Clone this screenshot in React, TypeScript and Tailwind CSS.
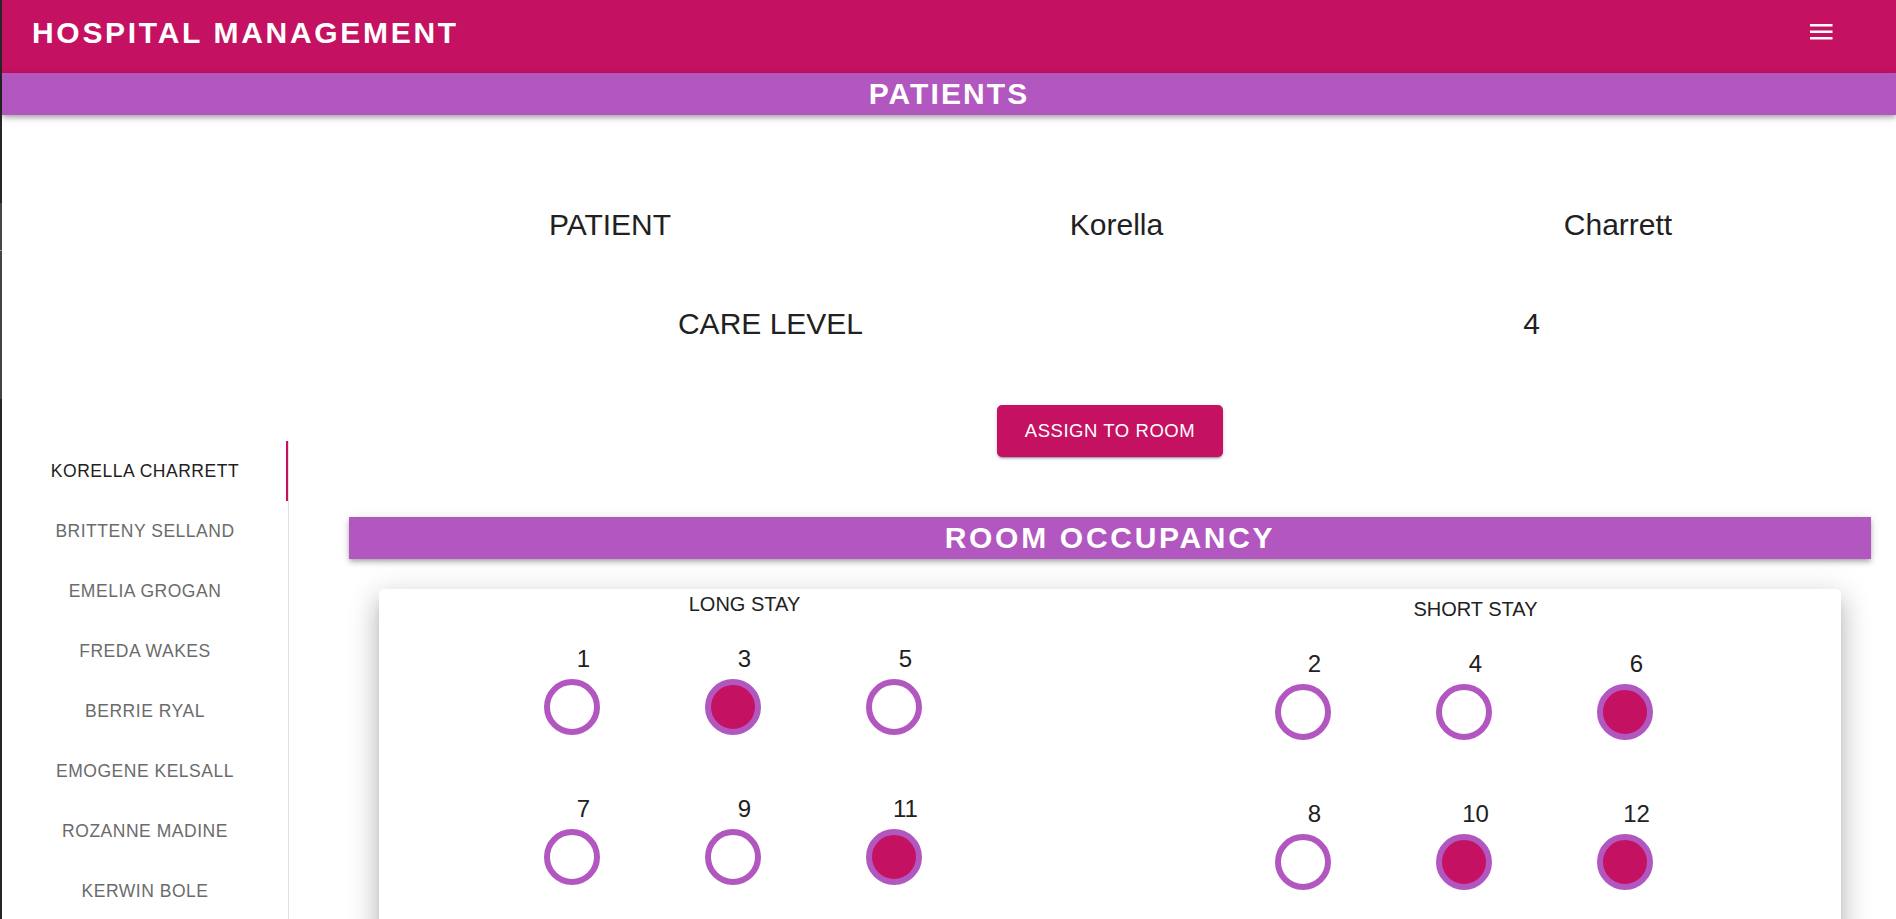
import { useState } from "react";

const patients = [
  "Korella Charrett",
  "Britteny Selland",
  "Emelia Grogan",
  "Freda Wakes",
  "Berrie Ryal",
  "Emogene Kelsall",
  "Rozanne Madine",
  "Kerwin Bole",
];

type Room = { no: number; taken: boolean };

const longStay: Room[][] = [
  [
    { no: 1, taken: false },
    { no: 3, taken: true },
    { no: 5, taken: false },
  ],
  [
    { no: 7, taken: false },
    { no: 9, taken: false },
    { no: 11, taken: true },
  ],
];

const shortStay: Room[][] = [
  [
    { no: 2, taken: false },
    { no: 4, taken: false },
    { no: 6, taken: true },
  ],
  [
    { no: 8, taken: false },
    { no: 10, taken: true },
    { no: 12, taken: true },
  ],
];

function MenuIcon() {
  return (
    <svg width="23" height="16" viewBox="0 0 23 16" fill="white">
      <rect x="0" y="0" width="22.5" height="2.5" />
      <rect x="0" y="6.5" width="22.5" height="2.5" />
      <rect x="0" y="13" width="22.5" height="2.5" />
    </svg>
  );
}

function RoomCell({ room }: { room: Room }) {
  return (
    <div className="flex w-[161px] flex-col items-center">
      <span className="text-[24px] leading-[28px] text-[#212121]">{room.no}</span>
      <div
        className={
          room.taken
            ? "mr-[24px] mt-[6px] h-[56px] w-[56px] rounded-full border-[6px] border-[#b157bf] bg-[#c51162]"
            : "mr-[24px] mt-[6px] h-[56px] w-[56px] rounded-full border-[6px] border-[#b157bf] bg-white"
        }
      />
    </div>
  );
}

function StayColumn({ title, rows, offset }: { title: string; rows: Room[][]; offset?: boolean }) {
  return (
    <div className={offset ? "flex flex-col items-center pt-[5px]" : "flex flex-col items-center"}>
      <div className="text-[20px] leading-[30px] text-[#212121]">{title}</div>
      <div className="mt-[26px] flex flex-col gap-[60px]">
        {rows.map((row, i) => (
          <div key={i} className="flex justify-center">
            {row.map((room) => (
              <RoomCell key={room.no} room={room} />
            ))}
          </div>
        ))}
      </div>
    </div>
  );
}

export default function App() {
  const [active, setActive] = useState(0);
  const [first, last] = patients[active].split(" ");

  return (
    <div className="flex h-screen overflow-hidden bg-white font-['Liberation_Sans',Arial,sans-serif]">
      {/* window edge */}
      <div className="flex w-[2px] shrink-0 flex-col">
        <div className="h-[203px] bg-[#262626]" />
        <div className="h-[47px] bg-[#474747]" />
        <div className="h-[1px] bg-[#9a9a9a]" />
        <div className="h-[148px] bg-[#444444]" />
        <div className="flex-1 bg-[#262626]" />
      </div>

      <div className="flex min-w-0 flex-1 flex-col">
        <header className="flex h-[73px] shrink-0 items-center justify-between bg-[#c51162] pb-[9px] pl-[30px] pr-[55px]">
          <h1 className="text-[30px] font-bold tracking-[0.09em] text-white">HOSPITAL MANAGEMENT</h1>
          <button className="flex h-[40px] w-[40px] items-center justify-center">
            <MenuIcon />
          </button>
        </header>
        <div className="relative z-10 flex h-[42px] shrink-0 items-center justify-center bg-[#b157bf] text-[30px] font-bold leading-[42px] tracking-[0.07em] text-white shadow-[0_2px_4px_-1px_rgba(0,0,0,0.2),0_4px_5px_0_rgba(0,0,0,0.14),0_1px_10px_0_rgba(0,0,0,0.12)]">
          PATIENTS
        </div>

        <div className="flex min-h-0 flex-1">
          <nav className="mt-[326px] w-[287px] shrink-0 self-start border-r border-[#e0e0e0]">
            {patients.map((p, i) => (
              <button
                key={p}
                onClick={() => setActive(i)}
                className={
                  i === active
                    ? "relative flex h-[60px] w-full items-center justify-center text-[17.5px] uppercase tracking-[0.03em] text-[#212121]"
                    : "relative flex h-[60px] w-full items-center justify-center text-[17.5px] uppercase tracking-[0.03em] text-[#6b6b6b]"
                }
              >
                {p}
                {i === active && <span className="absolute right-0 top-0 h-full w-[2px] bg-[#c51162]" />}
              </button>
            ))}
          </nav>

          <main className="min-w-0 flex-1 pl-[60px] pr-[25px] pt-[87px]">
            <div className="ml-[8px] flex text-[30px] leading-[45px] text-[#212121]">
              <div className="w-[506px] text-center">PATIENT</div>
              <div className="w-[507px] text-center">{first}</div>
              <div className="w-[496px] text-center">{last}</div>
            </div>
            <div className="ml-[41px] mt-[54px] grid w-[1522px] grid-cols-2 text-[30px] leading-[45px] text-[#212121]">
              <div className="text-center">CARE LEVEL</div>
              <div className="text-center">4</div>
            </div>
            <div className="mt-[59px] flex justify-center">
              <button className="h-[52px] w-[226px] rounded-[5px] bg-[#c51162] text-[18.5px] uppercase tracking-[0.03em] text-white shadow-[0_3px_1px_-2px_rgba(0,0,0,0.2),0_2px_2px_0_rgba(0,0,0,0.14),0_1px_5px_0_rgba(0,0,0,0.12)]">
                Assign to room
              </button>
            </div>

            <div className="mt-[60px] flex h-[42px] items-center justify-center bg-[#b157bf] text-[30px] font-bold leading-[42px] tracking-[0.09em] text-white shadow-[0_2px_4px_-1px_rgba(0,0,0,0.2),0_4px_5px_0_rgba(0,0,0,0.14),0_1px_10px_0_rgba(0,0,0,0.12)]">
              ROOM OCCUPANCY
            </div>

            <div className="mx-[30px] mt-[30px] grid grid-cols-2 rounded-[5px] bg-white pb-[60px] shadow-[0_8px_10px_-5px_rgba(0,0,0,0.2),0_16px_24px_2px_rgba(0,0,0,0.14),0_6px_30px_5px_rgba(0,0,0,0.12)]">
              <StayColumn title="LONG STAY" rows={longStay} />
              <StayColumn title="SHORT STAY" rows={shortStay} offset />
            </div>
          </main>
        </div>
      </div>
    </div>
  );
}
